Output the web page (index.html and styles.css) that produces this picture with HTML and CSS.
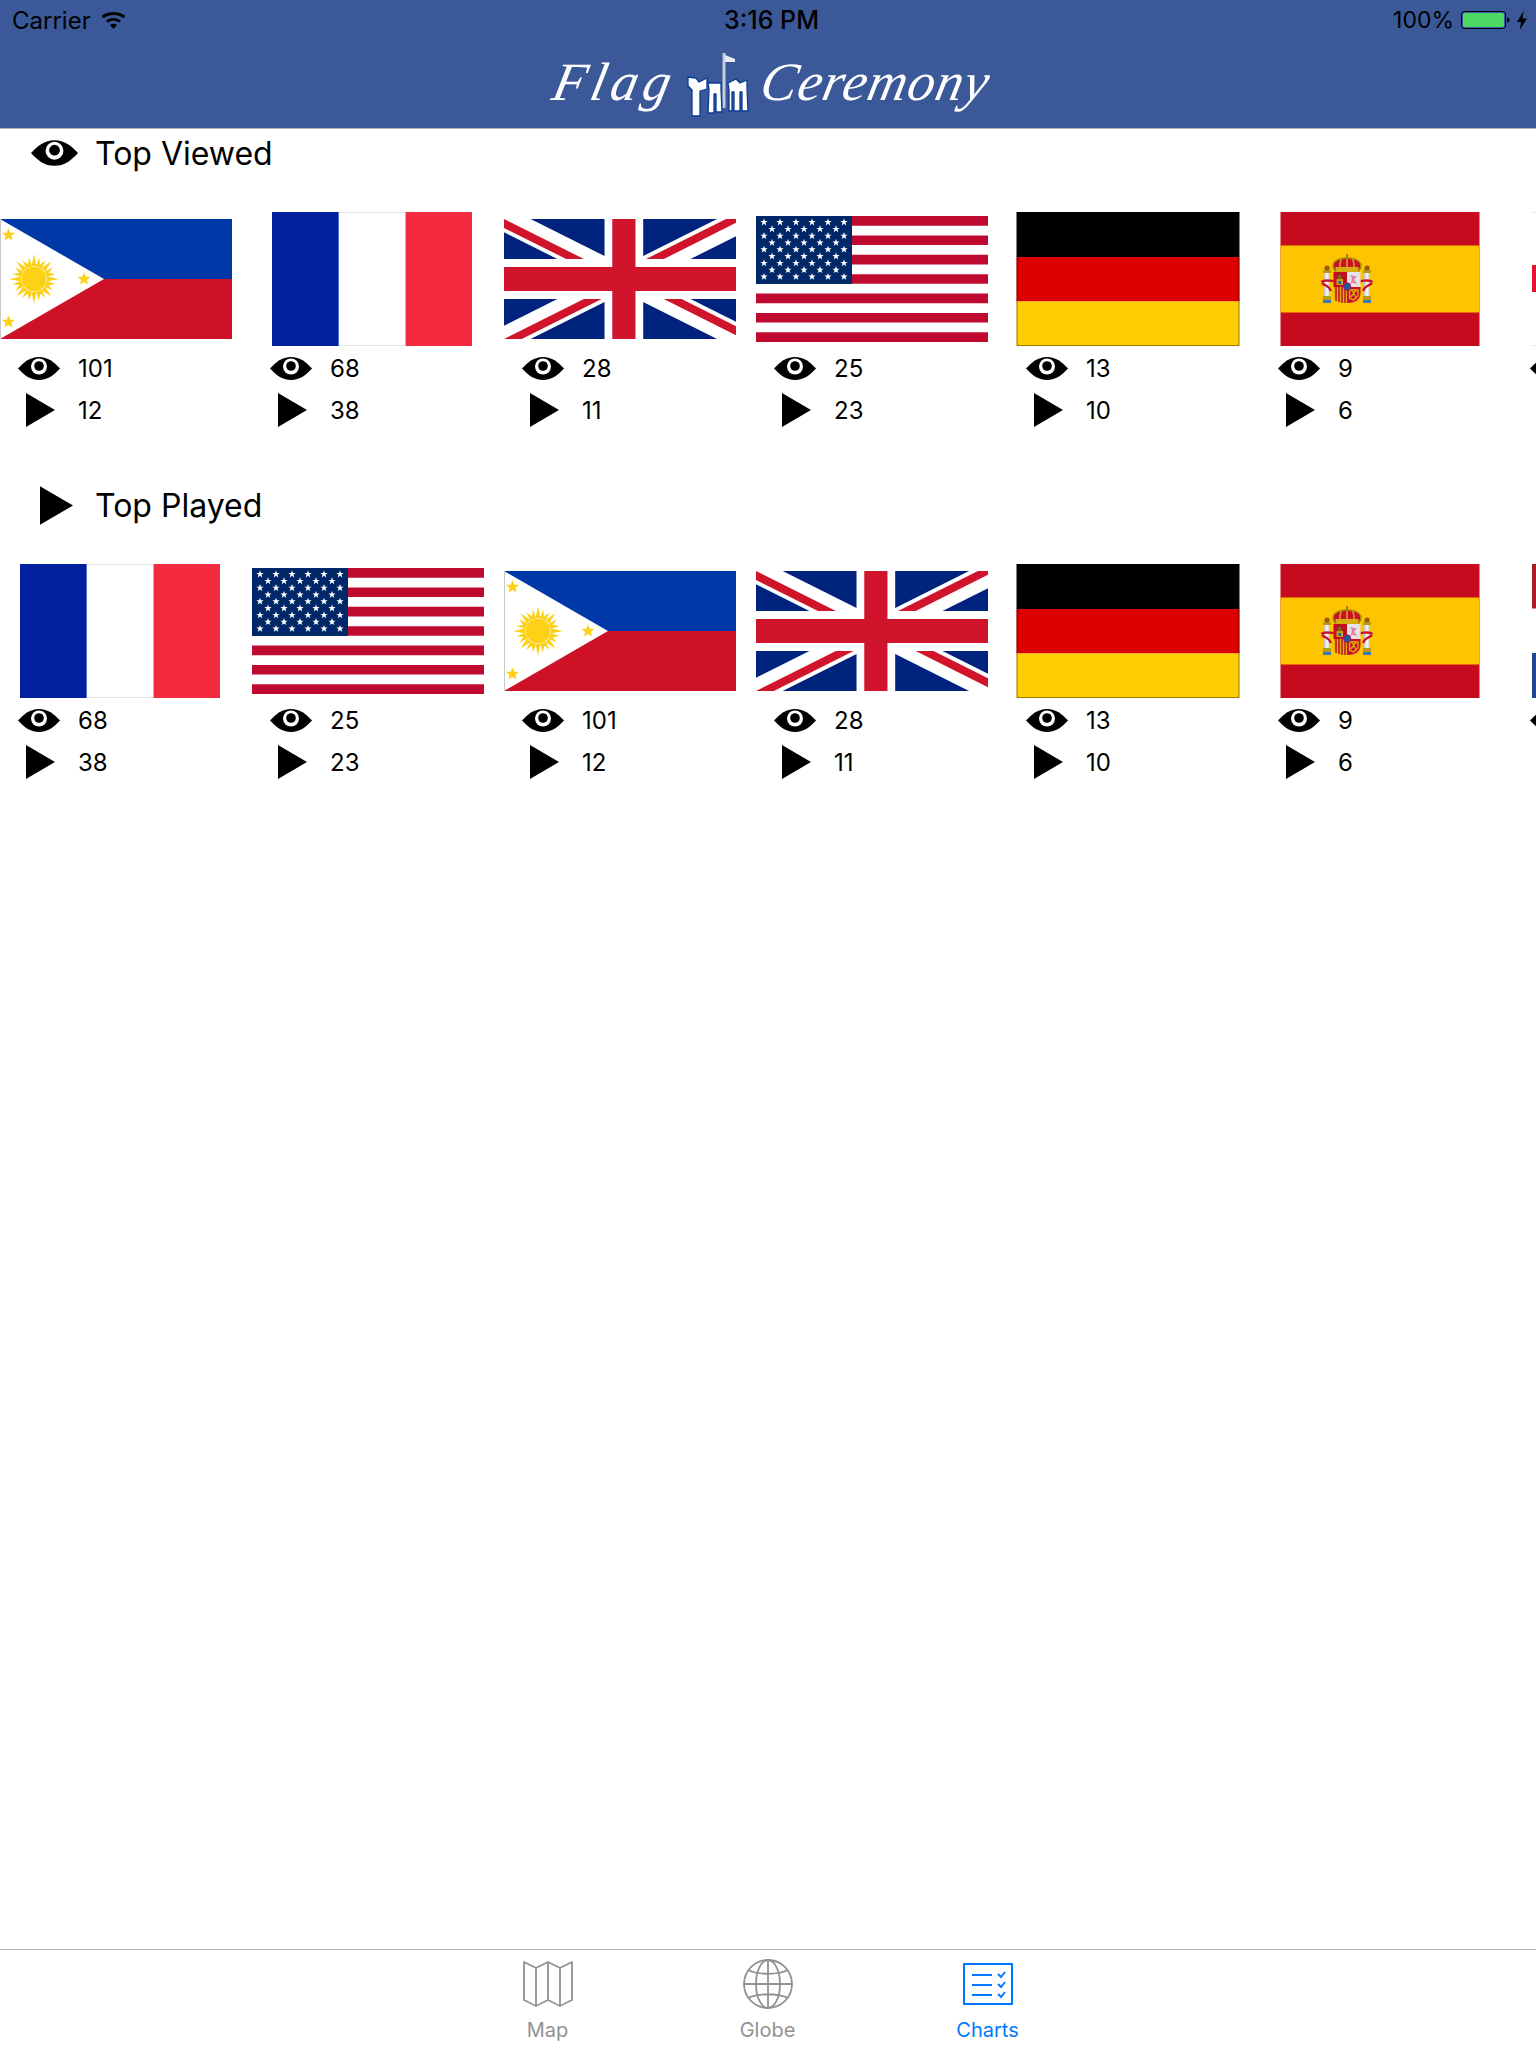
FILE: index.html
```html
<!DOCTYPE html>
<html lang="en">
<head>
<meta charset="utf-8">
<title>Flag Ceremony</title>
<link rel="stylesheet" href="styles.css">
</head>
<body>
<svg class="defs" aria-hidden="true">
  <defs>
    <symbol id="eye" viewBox="0 0 42 23">
      <path d="M0 11.500C6 5 12 0 21 0s15 5 21 11.500C36 18 30 23 21 23S6 18 0 11.500Z" fill="#000"/>
      <circle cx="21" cy="9.500" r="8" fill="#fff"/>
      <circle cx="21" cy="9" r="4.800" fill="#000"/>
    </symbol>
    <symbol id="play" viewBox="0 0 29 34">
      <path d="M0 0L29 17L0 34Z" fill="#000"/>
    </symbol>
    <path id="star-w" d="M0-3.800L.95-1.200H3.600L1.500.45L2.300 3.100L0 1.500L-2.300 3.100L-1.500.45L-3.600-1.200H-.95Z" fill="#fff"/>
    <g id="stars6"><use href="#star-w" x="8"/><use href="#star-w" x="24"/><use href="#star-w" x="40"/><use href="#star-w" x="56"/><use href="#star-w" x="72"/><use href="#star-w" x="88"/></g>
    <g id="stars5"><use href="#star-w" x="16"/><use href="#star-w" x="32"/><use href="#star-w" x="48"/><use href="#star-w" x="64"/><use href="#star-w" x="80"/></g>
    <path id="star-y" d="M0-6.800L1.800-2.200H6.600L2.800.9L4.200 5.600L0 2.900L-4.200 5.600L-2.800.9L-6.600-2.200H-1.800Z" fill="#fcd116"/>
    <path id="ray" d="M31.500 47L34 35L36.500 47ZM27.300 48.500L29 38.500L32 47.300ZM36 47.300L39 38.500L40.700 48.500Z" fill="#fcd116"/>
    <symbol id="flag-ph" viewBox="0 0 232 120">
      <rect width="232" height="60" fill="#0038a8"/>
      <rect y="60" width="232" height="60" fill="#ce1126"/>
      <path d="M0 0L104 60L0 120Z" fill="#fff"/>
      <path d="M.5 0V120" stroke="#c8c8c8" stroke-width="1"/>
      <circle cx="34" cy="60" r="12.500" fill="#fcd116"/>
      <use href="#ray"/><use href="#ray" transform="rotate(45 34 60)"/><use href="#ray" transform="rotate(90 34 60)"/><use href="#ray" transform="rotate(135 34 60)"/><use href="#ray" transform="rotate(180 34 60)"/><use href="#ray" transform="rotate(225 34 60)"/><use href="#ray" transform="rotate(270 34 60)"/><use href="#ray" transform="rotate(315 34 60)"/>
      <use href="#star-y" x="8.500" y="16"/><use href="#star-y" x="84" y="60"/><use href="#star-y" x="8.500" y="103"/>
    </symbol>
    <symbol id="flag-fr" viewBox="0 0 200 134">
      <rect width="67" height="134" fill="#00209f"/>
      <rect x="67" width="66" height="134" fill="#fff"/>
      <rect x="133" width="67" height="134" fill="#f42a41"/>
      <path d="M67 .5H133M67 133.500H133" stroke="#e8e8e8"/>
      <path d="M66.500 0V134" stroke="#5a70c8"/><path d="M133.500 0V134" stroke="#f4a0ac"/>
    </symbol>
    <clipPath id="uk-tri"><path d="M31 15H62V30ZV30H0ZH0V0ZV0H62Z"/></clipPath>
    <symbol id="flag-uk" viewBox="0 0 60 30" preserveAspectRatio="none">
      <rect width="60" height="30" fill="#00247d"/>
      <path d="M0 0L62 30M62 0L0 30" stroke="#fff" stroke-width="6"/>
      <path d="M0 0L62 30M62 0L0 30" stroke="#cf142b" stroke-width="4" clip-path="url(#uk-tri)"/>
      <path d="M31 0V30M0 15H60" stroke="#fff" stroke-width="10"/>
      <path d="M31 0V30M0 15H60" stroke="#cf142b" stroke-width="6"/>
    </symbol>
    <symbol id="flag-us" viewBox="0 0 232 126">
      <rect width="232" height="126" fill="#fff"/>
      <path d="M0 4.850H232M0 24.230H232M0 43.620H232M0 63H232M0 82.380H232M0 101.770H232M0 121.150H232" stroke="#bf0a30" stroke-width="9.690"/>
      <rect width="96" height="68" fill="#002868"/>
      <use href="#stars6" y="6.300"/><use href="#stars5" y="13.100"/><use href="#stars6" y="19.900"/><use href="#stars5" y="26.700"/><use href="#stars6" y="33.500"/><use href="#stars5" y="40.300"/><use href="#stars6" y="47.100"/><use href="#stars5" y="53.900"/><use href="#stars6" y="60.700"/>
    </symbol>
    <symbol id="flag-de" viewBox="0 0 223 134">
      <rect width="223" height="45" fill="#000"/>
      <rect y="45" width="223" height="44.500" fill="#d00"/>
      <rect y="89.500" width="223" height="44.500" fill="#ffce00"/>
      <path d="M.5 45V133.500H222.500V45" fill="none" stroke="#000" stroke-opacity=".4"/>
    </symbol>
    <symbol id="flag-es" viewBox="0 0 199 134">
      <rect width="199" height="134" fill="#c60b1e"/>
      <rect y="33.500" width="199" height="67" fill="#ffc400"/>
      <path d="M53 56C51 50 57 46 66.500 46S82 50 80 56L78 60H55Z" fill="#c8102e" stroke="#a8860c" stroke-width="1.500"/>
      <path d="M61 47C59 51 59 54 60 58M72 47C74 51 74 54 73 58M66.500 46V58" fill="none" stroke="#d8ac10" stroke-width="1.500"/>
      <rect x="55" y="55" width="23" height="5" fill="#d8ac10"/>
      <rect x="65.700" y="42" width="1.800" height="5" fill="#8a7a20"/>
      <path d="M43.500 60H49.500V85H43.500ZM83.500 60H89.500V85H83.500Z" fill="#c8c8c8"/>
      <path d="M45 60H48V85H45ZM85 60H88V85H85Z" fill="#f0f0f0"/>
      <path d="M42.500 58H50.500V61H42.500ZM82.500 58H90.500V61H82.500ZM42.500 84H50.500V88H42.500ZM82.500 84H90.500V88H82.500Z" fill="#b89a10"/>
      <circle cx="46.500" cy="56" r="2.600" fill="#9a5a0a"/><circle cx="86.500" cy="56" r="2.600" fill="#9a5a0a"/>
      <path d="M42.500 88H50.500V91H42.500ZM82.500 88H90.500V91H82.500Z" fill="#3a78b8"/>
      <path d="M41 70C44 67 49 69 53 69M41.500 71C44 74 50 74 50 79M92 70C89 67 84 69 80 69M91.500 71C89 74 83 74 83 79" fill="none" stroke="#c8102e" stroke-width="2.400"/>
      <path d="M53 60H66.500V75H53Z" fill="#c01020"/>
      <path d="M66.500 60H80V75H66.500Z" fill="#e8e4e4"/>
      <path d="M53 75H66.500V91C58 91 53 88 53 81Z" fill="#e0b000"/>
      <path d="M55.500 75V89M58.500 75V90M61.500 75V91M64.500 75V91" stroke="#c8102e" stroke-width="1.500"/>
      <path d="M66.500 75H80V81C80 88 74 91 66.500 91Z" fill="#c8102e"/>
      <path d="M69 78H77.500V84L73 88L69 86ZM71 78L76 86M76 78L70 85" fill="none" stroke="#e0b000" stroke-width="1.300"/>
      <path d="M70 63L76 64.500L73.500 68L77 72L71.500 70.500L69.500 73L71.500 67Z" fill="#e87aa8"/>
      <path d="M56 67H62.500V73H56Z" fill="#c8a010"/><path d="M57.500 63H61V67H57.500Z" fill="#7a6a20"/><rect x="58" y="69" width="2.500" height="3" fill="#2a5a9a"/>
      <ellipse cx="66.700" cy="74.700" rx="3.600" ry="4" fill="#1a5aa8" stroke="#c8102e" stroke-width=".8"/>
    </symbol>
    <symbol id="flag-nx" viewBox="0 0 200 134">
      <path d="M0 .5H200M0 133.500H200" stroke="#e8e8e8"/>
      <rect y="53" width="200" height="27" fill="#e4112f"/>
    </symbol>
    <symbol id="flag-nl" viewBox="0 0 200 134">
      <rect width="200" height="44.500" fill="#ae1c28"/>
      <rect y="89" width="200" height="45" fill="#21468b"/>
    </symbol>
  </defs>
</svg>

<header class="nav">
  <div class="status">
    <div class="status-left">
      <span>Carrier</span>
      <svg class="wifi" viewBox="0 0 25 17"><path d="M12.500 17L9 13C11 11.200 14 11.200 16 13ZM7 10.700L5 8.500C9 5 16 5 20 8.500L18 10.700C15 8.100 10 8.100 7 10.700ZM2.800 6.300L.5 4C7 -1.300 18 -1.300 24.500 4L22.200 6.300C17 2 8 2 2.800 6.300Z" fill="#000"/></svg>
    </div>
    <span class="time">3:16 PM</span>
    <div class="status-right">
      <span class="percent">100%</span>
      <svg class="battery" viewBox="0 0 49 18"><rect x=".5" y=".5" width="44" height="17" rx="3" fill="none" stroke="#000"/><rect x="2" y="2" width="41" height="14" rx="1.500" fill="#4cd964"/><path d="M46 6.500C47.500 6.500 48.500 7.500 48.500 9S47.500 11.500 46 11.500Z" fill="#000"/></svg>
      <svg class="bolt" viewBox="0 0 10 19"><path d="M6.500 0L0 11H4L2.800 19L10 7.500H5.600Z" fill="#000"/></svg>
    </div>
  </div>
  <div class="logo">
    <span class="logo-word logo-flag">Flag</span>
    <svg class="logo-mark" viewBox="0 0 80 72">
      <path d="M42.500 5H45.500V60H42.500Z" fill="#c4cce0"/>
      <path d="M45 7L55 11V14H45Z" fill="#e8ecf4"/>
      <g fill="#fff" stroke="#0b3a96" stroke-width="1.300" stroke-linejoin="round">
        <path d="M8 29L16 30L19 34L27 30V41L20 43V68H12V42L8 38Z"/>
        <path d="M28 35H41V41L42 64H36V46H34V65H28L29 41Z"/>
        <path d="M48 35L56 31L60 35L67 32V40L68 63H62V44H60V63H54V44H52V63H49V42Z"/>
      </g>
    </svg>
    <span class="logo-word logo-cer">Ceremony</span>
  </div>
</header>

<main class="content">
  <section class="chart">
    <h2 class="chart-title chart-title-eye"><svg class="title-eye"><use href="#eye"/></svg><span>Top Viewed</span></h2>
    <div class="flags">
      <article class="cell"><div class="slot"><svg class="flag f-ph"><use href="#flag-ph"/></svg></div>
        <div class="stat"><svg class="stat-eye"><use href="#eye"/></svg><span>101</span></div>
        <div class="stat"><svg class="stat-play"><use href="#play"/></svg><span>12</span></div></article>
      <article class="cell"><div class="slot"><svg class="flag f-fr"><use href="#flag-fr"/></svg></div>
        <div class="stat"><svg class="stat-eye"><use href="#eye"/></svg><span>68</span></div>
        <div class="stat"><svg class="stat-play"><use href="#play"/></svg><span>38</span></div></article>
      <article class="cell"><div class="slot"><svg class="flag f-uk"><use href="#flag-uk"/></svg></div>
        <div class="stat"><svg class="stat-eye"><use href="#eye"/></svg><span>28</span></div>
        <div class="stat"><svg class="stat-play"><use href="#play"/></svg><span>11</span></div></article>
      <article class="cell"><div class="slot"><svg class="flag f-us"><use href="#flag-us"/></svg></div>
        <div class="stat"><svg class="stat-eye"><use href="#eye"/></svg><span>25</span></div>
        <div class="stat"><svg class="stat-play"><use href="#play"/></svg><span>23</span></div></article>
      <article class="cell"><div class="slot"><svg class="flag f-de"><use href="#flag-de"/></svg></div>
        <div class="stat"><svg class="stat-eye"><use href="#eye"/></svg><span>13</span></div>
        <div class="stat"><svg class="stat-play"><use href="#play"/></svg><span>10</span></div></article>
      <article class="cell"><div class="slot"><svg class="flag f-es"><use href="#flag-es"/></svg></div>
        <div class="stat"><svg class="stat-eye"><use href="#eye"/></svg><span>9</span></div>
        <div class="stat"><svg class="stat-play"><use href="#play"/></svg><span>6</span></div></article>
      <article class="cell"><div class="slot"><svg class="flag f-nx"><use href="#flag-nx"/></svg></div>
        <div class="stat"><svg class="stat-eye"><use href="#eye"/></svg></div>
        <div class="stat"><svg class="stat-play"><use href="#play"/></svg></div></article>
    </div>
  </section>

  <section class="chart">
    <h2 class="chart-title chart-title-play"><svg class="title-play"><use href="#play"/></svg><span>Top Played</span></h2>
    <div class="flags">
      <article class="cell"><div class="slot"><svg class="flag f-fr"><use href="#flag-fr"/></svg></div>
        <div class="stat"><svg class="stat-eye"><use href="#eye"/></svg><span>68</span></div>
        <div class="stat"><svg class="stat-play"><use href="#play"/></svg><span>38</span></div></article>
      <article class="cell"><div class="slot"><svg class="flag f-us"><use href="#flag-us"/></svg></div>
        <div class="stat"><svg class="stat-eye"><use href="#eye"/></svg><span>25</span></div>
        <div class="stat"><svg class="stat-play"><use href="#play"/></svg><span>23</span></div></article>
      <article class="cell"><div class="slot"><svg class="flag f-ph"><use href="#flag-ph"/></svg></div>
        <div class="stat"><svg class="stat-eye"><use href="#eye"/></svg><span>101</span></div>
        <div class="stat"><svg class="stat-play"><use href="#play"/></svg><span>12</span></div></article>
      <article class="cell"><div class="slot"><svg class="flag f-uk"><use href="#flag-uk"/></svg></div>
        <div class="stat"><svg class="stat-eye"><use href="#eye"/></svg><span>28</span></div>
        <div class="stat"><svg class="stat-play"><use href="#play"/></svg><span>11</span></div></article>
      <article class="cell"><div class="slot"><svg class="flag f-de"><use href="#flag-de"/></svg></div>
        <div class="stat"><svg class="stat-eye"><use href="#eye"/></svg><span>13</span></div>
        <div class="stat"><svg class="stat-play"><use href="#play"/></svg><span>10</span></div></article>
      <article class="cell"><div class="slot"><svg class="flag f-es"><use href="#flag-es"/></svg></div>
        <div class="stat"><svg class="stat-eye"><use href="#eye"/></svg><span>9</span></div>
        <div class="stat"><svg class="stat-play"><use href="#play"/></svg><span>6</span></div></article>
      <article class="cell"><div class="slot"><svg class="flag f-nl"><use href="#flag-nl"/></svg></div>
        <div class="stat"><svg class="stat-eye"><use href="#eye"/></svg></div>
        <div class="stat"><svg class="stat-play"><use href="#play"/></svg></div></article>
    </div>
  </section>
</main>

<nav class="tabs">
  <a class="tab">
    <svg class="tab-icon" viewBox="0 0 50 50"><path d="M1 3L13 9L25 3L37 9L49 3V41L37 47L25 41L13 47L1 41ZM13 9V47M25 3V41M37 9V47" fill="none" stroke="#929292" stroke-width="1.800" stroke-linejoin="round"/></svg>
    <span>Map</span>
  </a>
  <a class="tab">
    <svg class="tab-icon" viewBox="0 0 50 50"><g fill="none" stroke="#929292" stroke-width="1.800"><circle cx="25" cy="25" r="24"/><ellipse cx="25" cy="25" rx="12" ry="24"/><path d="M25 1V49M1 25H49M5 11C15 16 35 16 45 11M5 39C15 34 35 34 45 39"/></g></svg>
    <span>Globe</span>
  </a>
  <a class="tab tab-active">
    <svg class="tab-icon" viewBox="0 0 50 50"><g fill="none" stroke="#007aff"><rect x="1" y="5" width="48" height="40" stroke-width="2"/><path d="M9 16H29M9 26H29M9 36H29" stroke-width="2"/><path d="M35 15L38 18L42 13M35 25L38 28L42 23M35 35L38 38L42 33" stroke-width="2"/></g></svg>
    <span>Charts</span>
  </a>
</nav>
</body>
</html>
```

FILE: styles.css
```css
* { box-sizing: border-box; }
html, body { margin: 0; padding: 0; background: #fff; }
body {
  width: 1536px;
  height: 2048px;
  overflow: hidden;
  display: flex;
  flex-direction: column;
  font-family: Inter, "Liberation Sans", sans-serif;
  color: #000;
}
.defs { position: absolute; width: 0; height: 0; }

.nav {
  height: 129px;
  flex: none;
  background: #3b5998;
  border-bottom: 1px solid #b2b2b2;
}
.status {
  height: 40px;
  padding: 0 9px 0 12px;
  display: grid;
  grid-template-columns: 1fr auto 1fr;
  align-items: center;
  font-size: 24px;
}
.status-left { display: flex; align-items: center; gap: 10px; }
.wifi { width: 25px; height: 17px; }
.time { font-weight: 500; font-size: 25px; padding-left: 4px; }
.percent { font-size: 23px; }
.status-right { display: flex; align-items: center; justify-content: flex-end; gap: 7px; }
.battery { width: 49px; height: 18px; }
.bolt { width: 10px; height: 19px; }

.logo {
  height: 88px;
  display: flex;
  justify-content: center;
  align-items: flex-start;
  padding-left: 10px;
  color: #fff;
  font-family: "Liberation Serif", serif;
  font-style: italic;
}
.logo-word {
  display: block;
  font-size: 54px;
  line-height: 64px;
  padding-top: 10px;
  transform: skewX(-12deg);
}
.logo-flag { letter-spacing: 5px; }
.logo-cer { letter-spacing: 1px; }
.logo-mark { width: 80px; height: 72px; margin: 8px 3px 0; }

.chart { height: 352px; display: flex; flex-direction: column; }
.chart-title {
  height: 48px;
  margin: 0 0 35px;
  display: flex;
  align-items: center;
  font-size: 32px;
  font-weight: 400;
  line-height: 48px;
}
.chart-title span { padding-top: 2px; }
.chart-title-eye { padding-left: 31px; }
.chart-title-play { padding-left: 40px; }
.title-eye { width: 47px; height: 26px; margin-right: 17px; }
.title-play { width: 33px; height: 39px; margin-right: 22px; }

.flags {
  display: grid;
  grid-template-columns: repeat(7, 252px);
}
.slot { height: 134px; display: flex; align-items: center; margin-bottom: 1px; }
.flag { display: block; }
.f-ph { width: 232px; height: 120px; }
.f-fr { width: 200px; height: 134px; margin-left: 20px; }
.f-uk { width: 232px; height: 120px; }
.f-us { width: 232px; height: 126px; }
.f-de { width: 224px; height: 134px; margin-left: 8px; }
.f-es { width: 200px; height: 134px; margin-left: 20px; }
.f-nx, .f-nl { width: 200px; height: 134px; margin-left: 20px; }

.stat { height: 42px; display: flex; align-items: center; font-size: 24px; white-space: nowrap; }
.stat-eye { width: 42px; height: 23px; margin: 0 18px 0 18px; flex: none; }
.stat-play { width: 29px; height: 34px; margin: 0 23px 0 26px; flex: none; }

.content { flex: 1; overflow: hidden; }

.tabs {
  flex: none;
  height: 99px;
  border-top: 1px solid #b2b2b2;
  display: flex;
  justify-content: center;
  padding-right: 1px;
  background: #fff;
}
.tab {
  width: 220px;
  display: flex;
  flex-direction: column;
  align-items: center;
  padding-top: 9px;
  color: #929292;
  font-size: 20px;
  line-height: 24px;
}
.tab-icon { width: 50px; height: 50px; margin-bottom: 9px; }
.tab-active { color: #007aff; }
```
